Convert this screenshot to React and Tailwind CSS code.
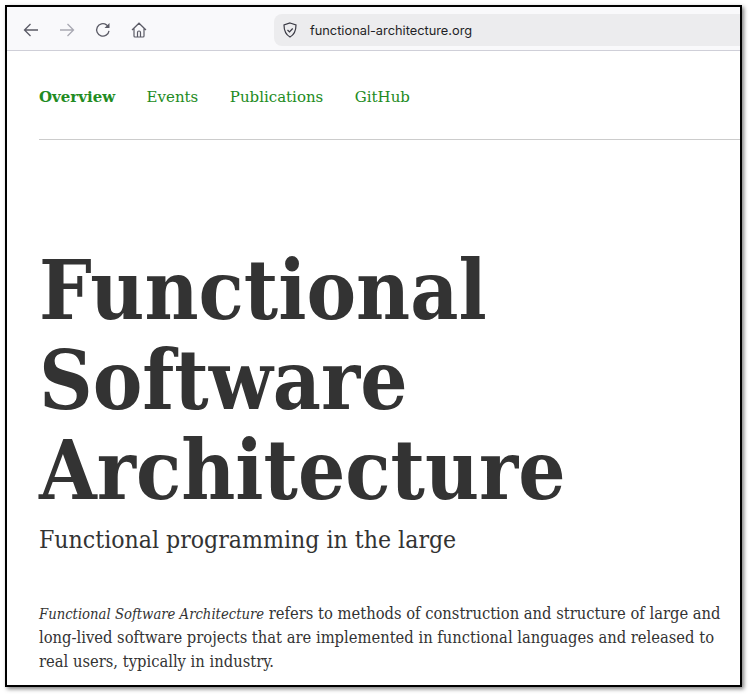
import React from 'react';

function Toolbar() {
    return (
        <div className="flex h-[44px] items-center bg-[#f9f9fb] border-b border-[#cfcfd8] pt-[3px]">
            <div className="flex items-center gap-[20px] pl-[16px] w-[267px] text-[#5b5b66]">
                <svg width="16" height="16" viewBox="0 0 16 16" fill="none" stroke="currentColor" strokeWidth="1.3"><path d="M15 8H1.5M7.5 2 1.5 8l6 6" /></svg>
                <svg width="16" height="16" viewBox="0 0 16 16" fill="none" stroke="#a9a9b2" strokeWidth="1.3"><path d="M1 8h13.5M8.500 2l6 6-6 6" /></svg>
                <svg width="16" height="16" viewBox="0 0 16 16" fill="none" stroke="currentColor" strokeWidth="1.3"><path d="M14 8.800A6.200 6.200 0 1 1 11.500 2.900L13 4.400" /><path d="M14.500 1v5h-5Z" fill="currentColor" stroke="none" /></svg>
                <svg width="16" height="16" viewBox="0 0 16 16" fill="none" stroke="currentColor" strokeWidth="1.2"><path d="M1 8 8 1.200 15 8M3 6.500V14a1 1 0 0 0 1 1h8a1 1 0 0 0 1-1V6.500M6.500 15v-4.500a1.500 1.500 0 0 1 3 0V15" /></svg>
            </div>
            <div className="flex h-[32px] flex-1 items-center rounded-l-[8px] bg-[#ececee] pl-[8px]">
                <svg width="16" height="16" viewBox="0 0 16 16" fill="none" stroke="#3a3a44" strokeWidth="1.2"><path d="M8 1 14 3c0 6-1.500 9.500-6 12C3.500 12.500 2 9 2 3L8 1Z" /><path d="m5.500 8 2 2 3.200-3.500" /></svg>
                <span className="ml-[12px] mt-[2px] font-['Inter',sans-serif] text-[12.8px] text-[#1f1f26]">functional-architecture.org</span>
            </div>
        </div>
    );
}

export default function App() {
    return (
        <div className="h-[694px] w-[751px] overflow-hidden bg-white pt-[5px] pr-[9px] pb-[7px] pl-[5px]">
            <div className="h-full overflow-hidden border-2 border-black bg-white shadow-[2px_2px_4px_rgba(0,0,0,0.5)]">
                <Toolbar />
                <div className="pl-[32px] text-[#333333] font-['DejaVu_Serif_Condensed','DejaVu_Serif',serif]">
                    <nav className="flex h-[89px] items-center gap-[31.5px] border-b border-[#cccccc] pt-[5px] font-['DejaVu_Serif',serif] text-[15px] text-[#228b22]">
                        <a className="font-bold">Overview</a>
                        <a>Events</a>
                        <a>Publications</a>
                        <a>GitHub</a>
                    </nav>
                    <h1 className="mt-[105px] text-[82.7px] leading-[90px] font-bold">
                        Functional<br />Software<br />Architecture
                    </h1>
                    <p className="mt-[9px] text-[24.6px] leading-[32px]">Functional programming in the large</p>
                    <p className="mt-[46px] text-[16.4px] leading-[24px] pr-[8px]">
                        <em className="text-[14.7px]">Functional Software Architecture</em> refers to methods of construction and structure of large and long-lived software projects that are implemented in functional languages and released to real users, typically in industry.
                    </p>
                </div>
            </div>
        </div>
    );
}
